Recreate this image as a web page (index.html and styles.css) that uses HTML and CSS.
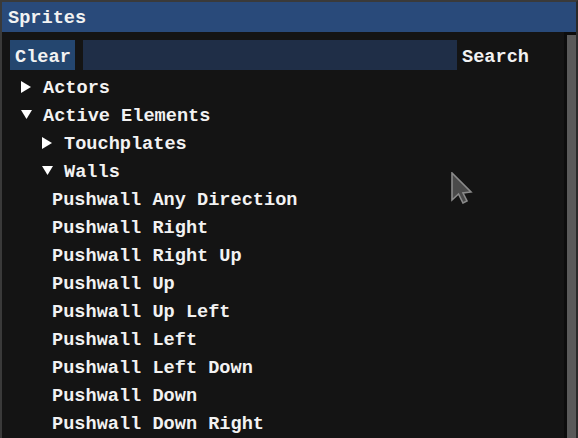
FILE: index.html
```html
<!DOCTYPE html>
<html>
<head>
<meta charset="utf-8">
<link rel="stylesheet" href="styles.css">
</head>
<body>
<div class="window">
  <div class="titlebar">Sprites</div>
  <div class="content">
    <div class="main">
      <div class="filter">
        <div class="btn">Clear</div>
        <div class="input"></div>
        <div class="label">Search</div>
      </div>
      <div class="tree">
        <div class="row l0"><svg class="arr" width="11" height="12" viewBox="0 0 11 12"><polygon points="0,0 10,6 0,12" fill="#fff"/></svg><span>Actors</span></div>
        <div class="row l0"><svg class="arr" width="11" height="12" viewBox="0 0 11 12"><polygon points="0,1 11,1 5.5,10" fill="#fff"/></svg><span>Active Elements</span></div>
        <div class="row l1"><svg class="arr" width="11" height="12" viewBox="0 0 11 12"><polygon points="0,0 10,6 0,12" fill="#fff"/></svg><span>Touchplates</span></div>
        <div class="row l1"><svg class="arr" width="11" height="12" viewBox="0 0 11 12"><polygon points="0,1 11,1 5.5,10" fill="#fff"/></svg><span>Walls</span></div>
        <div class="row leaf"><span>Pushwall Any Direction</span></div>
        <div class="row leaf"><span>Pushwall Right</span></div>
        <div class="row leaf"><span>Pushwall Right Up</span></div>
        <div class="row leaf"><span>Pushwall Up</span></div>
        <div class="row leaf"><span>Pushwall Up Left</span></div>
        <div class="row leaf"><span>Pushwall Left</span></div>
        <div class="row leaf"><span>Pushwall Left Down</span></div>
        <div class="row leaf"><span>Pushwall Down</span></div>
        <div class="row leaf"><span>Pushwall Down Right</span></div>
      </div>
    </div>
    <div class="scrollbar"><div class="grab"></div></div>
  </div>
  <svg class="cursor" width="22" height="32" viewBox="0 0 22 32"><polygon points="1,1 1,28 7.5,22 12,31 16,29 12,21 20,20" fill="#4a4a4a" stroke="#8a8a8a" stroke-width="1.6" stroke-linejoin="miter"/></svg>
</div>
</body>
</html>
```
FILE: styles.css
```css
html, body {
  margin: 0;
  padding: 0;
  background: #141414;
}
body {
  width: 578px;
  height: 438px;
  overflow: hidden;
  font-family: "Liberation Mono", "DejaVu Sans Mono", monospace;
  font-weight: bold;
  font-size: 18.6px;
  color: #f2f2f2;
}
.window {
  position: relative;
  box-sizing: border-box;
  width: 578px;
  height: 438px;
  border-top: 2px solid #3a3a3a;
  border-left: 2px solid #3a3a3a;
  border-right: 2px solid #2a2a2a;
  display: flex;
  flex-direction: column;
  background: #141414;
}
.titlebar {
  height: 30px;
  flex: none;
  background: #294a7a;
  padding-left: 6px;
  line-height: 34px;
}
.content {
  flex: 1;
  display: flex;
  min-height: 0;
}
.main {
  flex: 1;
  padding: 8px 0 0 8px;
}
.filter {
  display: flex;
  align-items: center;
  height: 30px;
}
.btn {
  width: 65px;
  height: 30px;
  background: #24466f;
  box-sizing: border-box;
  padding-left: 5px;
  line-height: 35px;
}
.input {
  width: 374px;
  height: 30px;
  margin-left: 8px;
  background: #1f2e47;
}
.label {
  margin-left: 5px;
  line-height: 35px;
  height: 30px;
}
.tree {
  margin-top: 3px;
}
.row {
  height: 28px;
  display: flex;
  align-items: center;
}
.row span {
  display: block;
  line-height: 28px;
  height: 28px;
  padding-top: 2px;
  box-sizing: border-box;
}
.row.l0 { padding-left: 11px; }
.row.l1 { padding-left: 32px; }
.row.leaf { padding-left: 42px; }
.arr {
  flex: none;
  margin-right: 11px;
  display: block;
}
.scrollbar {
  width: 12px;
  flex: none;
  background: #0c0c0c;
  display: flex;
  justify-content: flex-end;
  padding-top: 3px;
  box-sizing: border-box;
}
.grab {
  width: 9px;
  height: 420px;
  background: #5a5a5a;
}
.cursor {
  position: absolute;
  left: 449px;
  top: 170px;
}
```
